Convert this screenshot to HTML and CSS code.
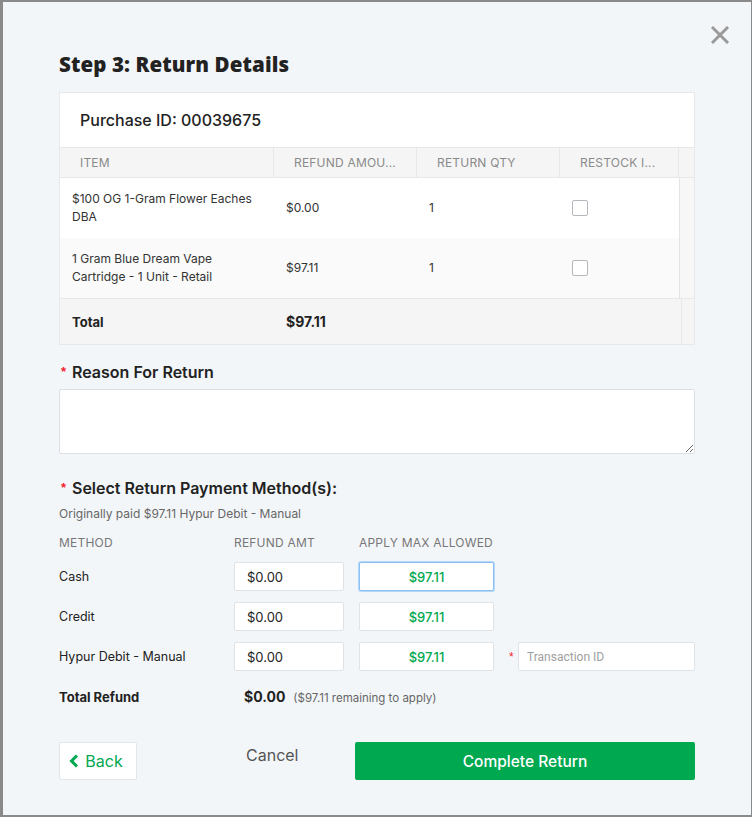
FILE: index.html
```html
<!DOCTYPE html>
<html>
<head>
<meta charset="utf-8">
<link rel="stylesheet" href="styles.css">
</head>
<body>
<div class="modal">
  <button class="close" aria-label="Close">
    <svg width="18" height="18" viewBox="0 0 18 18"><path d="M2 2 L16 16 M16 2 L2 16" stroke="#9a9a9a" stroke-width="3" stroke-linecap="square"/></svg>
  </button>
  <h1 class="title">Step 3: Return Details</h1>

  <div class="card">
    <div class="card-head">Purchase ID: 00039675</div>
    <div class="tbl">
      <div class="row head">
        <div class="cell">Item</div>
        <div class="cell">Refund Amou...</div>
        <div class="cell">Return Qty</div>
        <div class="cell">Restock I...</div>
        <div class="cell gutter"></div>
      </div>
      <div class="row body">
        <div class="cell">$100 OG 1-Gram Flower Eaches DBA</div>
        <div class="cell">$0.00</div>
        <div class="cell">1</div>
        <div class="cell"><span class="check"></span></div>
        <div class="cell gutter"></div>
      </div>
      <div class="row body alt">
        <div class="cell">1 Gram Blue Dream Vape Cartridge - 1 Unit - Retail</div>
        <div class="cell">$97.11</div>
        <div class="cell">1</div>
        <div class="cell"><span class="check"></span></div>
        <div class="cell gutter"></div>
      </div>
      <div class="row total">
        <div class="cell">Total</div>
        <div class="cell amt">$97.11</div>
        <div class="cell"></div>
        <div class="cell"></div>
        <div class="cell gutter"></div>
      </div>
    </div>
  </div>

  <div class="label first"><span class="req">*</span>Reason For Return</div>
  <textarea class="reason"></textarea>

  <div class="label second"><span class="req">*</span>Select Return Payment Method(s):</div>
  <div class="sub">Originally paid $97.11 Hypur Debit - Manual</div>

  <div class="pay">
    <div class="ph">Method</div>
    <div class="ph">Refund Amt</div>
    <div class="ph">Apply Max Allowed</div>
    <div></div>

    <div class="pm">Cash</div>
    <div class="inp">$0.00</div>
    <button class="max focus">$97.11</button>
    <div></div>

    <div class="pm">Credit</div>
    <div class="inp">$0.00</div>
    <button class="max">$97.11</button>
    <div></div>

    <div class="pm">Hypur Debit - Manual</div>
    <div class="inp">$0.00</div>
    <button class="max">$97.11</button>
    <div class="txn"><span class="req small">*</span><div class="txn-input">Transaction ID</div></div>
  </div>

  <div class="total-refund">
    <span class="tr-label">Total Refund</span>
    <span class="tr-amt">$0.00</span>
    <span class="tr-rem">($97.11 remaining to apply)</span>
  </div>

  <div class="actions">
    <button class="back">
      <svg width="10" height="14" viewBox="0 0 10 14"><path d="M8 1.5 L2.5 7 L8 12.5" fill="none" stroke="#00a84f" stroke-width="3"/></svg>
      Back
    </button>
    <button class="cancel">Cancel</button>
    <button class="complete">Complete Return</button>
  </div>
</div>
</body>
</html>
```

FILE: styles.css
```css
html, body {
  margin: 0;
  padding: 0;
}
body {
  background: #8a8a8a;
  font-family: Inter, "Noto Sans", "Liberation Sans", sans-serif;
  color: #222;
  width: 752px;
  height: 817px;
  overflow: hidden;
}
.modal {
  position: relative;
  box-sizing: border-box;
  margin: 2px 1px 0 3px;
  height: 813px;
  background: #f3f6f9;
  padding: 49px 56px 0 56px;
}
.close {
  position: absolute;
  top: 24px;
  right: 22px;
  border: 0;
  background: none;
  padding: 0;
  width: 18px;
  height: 18px;
  cursor: pointer;
}
.close svg { display: block; }
.title {
  margin: 0;
  font-family: "Open Sans", sans-serif;
  font-weight: 800;
  font-size: 20.5px;
  line-height: 26px;
  color: #222;
  letter-spacing: 0.1px;
}
.card {
  margin-top: 15px;
  background: #fff;
  border: 1px solid #e6e8ea;
}
.card-head {
  height: 54px;
  box-sizing: border-box;
  padding: 0 20px;
  display: flex;
  align-items: center;
  font-size: 16px;
  font-weight: 500;
  color: #222;
}
.tbl { display: flex; flex-direction: column; }
.row {
  display: grid;
  box-sizing: border-box;
  grid-template-columns: 214px 143px 143px 119px 15px;
}
.cell {
  display: flex;
  align-items: center;
  box-sizing: border-box;
  padding: 0 12px;
  font-size: 12px;
  line-height: 18px;
  color: #333;
  min-width: 0;
}
.cell.gutter { padding: 0; }
.row.head {
  height: 31px;
  background: #f5f5f5;
  border-top: 1px solid #e8e8e8;
  border-bottom: 1px solid #e8e8e8;
}
.row.head .cell {
  padding-left: 20px;
  text-transform: uppercase;
  color: #8a8a8a;
  font-size: 12px;
  letter-spacing: 0.2px;
  border-right: 1px solid #e8e8e8;
}
.row.head .cell.gutter { border-right: 0; padding: 0; }
.row.body { height: 60px; background: #fff; }
.row.body.alt { background: #fafafa; }
.row.body .gutter {
  background: #f7f7f7;
  border-left: 1px solid #e4e4e4;
}
.row.total {
  height: 46px;
  background: #f5f5f5;
  border-top: 1px solid #e8e8e8;
}
.row.total .cell {
  font-weight: 700;
  font-size: 13px;
  color: #222;
}
.row.total .cell.amt { font-size: 14px; }
.row.total .gutter { border-left: 1px solid #e8e8e8; margin-left: 2px; }
.check {
  display: block;
  width: 16px;
  height: 16px;
  box-sizing: border-box;
  border: 1px solid #b3b8bd;
  border-radius: 2px;
  background: #fff;
}
.label {
  font-size: 16px;
  font-weight: 600;
  line-height: 20px;
  color: #222;
  display: flex;
  align-items: center;
}
.label.first { margin-top: 17px; }
.label.second { margin-top: 24px; }
.req {
  color: #f5222d;
  font-size: 13px;
  width: 11px;
  margin-left: 2px;
  font-family: "Liberation Sans", sans-serif;
}
.reason {
  display: block;
  box-sizing: border-box;
  margin-top: 7px;
  width: 636px;
  height: 65px;
  border: 1px solid #dcdfe3;
  border-radius: 2px;
  background: #fff;
  resize: vertical;
  font-family: inherit;
}
.sub {
  margin-top: 8px;
  font-size: 12px;
  line-height: 16px;
  color: #666;
}
.pay {
  margin-top: 13px;
  display: grid;
  grid-template-columns: 175px 125px 135px 201px;
  row-gap: 11px;
  align-items: center;
}
.ph {
  font-size: 12px;
  line-height: 16px;
  text-transform: uppercase;
  color: #777;
  letter-spacing: 0.2px;
}
.pm {
  font-size: 12.5px;
  color: #222;
}
.inp {
  box-sizing: border-box;
  width: 110px;
  height: 29px;
  background: #fff;
  border: 1px solid #dfe2e6;
  border-radius: 2px;
  padding: 0 12px;
  display: flex;
  align-items: center;
  font-size: 13px;
  color: #222;
}
.max {
  box-sizing: border-box;
  width: 135px;
  height: 29px;
  background: #fff;
  border: 1px solid #dfe2e6;
  border-radius: 2px;
  font-family: inherit;
  font-size: 13px;
  font-weight: 500;
  color: #00a84f;
  padding: 0;
}
.max.focus {
  border-color: #8cc0f2;
  box-shadow: 0 0 0 1px #b5d7f8;
}
.txn {
  display: flex;
  align-items: center;
  justify-content: flex-end;
}
.req.small { width: 9px; margin-left: 0; font-size: 12px; }
.txn-input {
  box-sizing: border-box;
  width: 177px;
  height: 29px;
  background: #fff;
  border: 1px solid #dfe2e6;
  border-radius: 2px;
  padding: 0 8px;
  display: flex;
  align-items: center;
  font-family: Roboto, sans-serif;
  font-size: 12px;
  color: #a0a0a0;
}
.total-refund {
  margin-top: 16px;
  display: flex;
  align-items: baseline;
  height: 20px;
  line-height: 20px;
}
.tr-label {
  width: 185px;
  font-size: 13px;
  font-weight: 700;
  color: #222;
}
.tr-amt {
  font-size: 14px;
  font-weight: 700;
  color: #222;
  margin-right: 8px;
}
.tr-rem {
  font-size: 11.5px;
  color: #666;
}
.actions {
  margin-top: 35px;
  display: flex;
  align-items: flex-start;
}
.actions button {
  font-family: Inter, "Noto Sans", sans-serif;
  cursor: pointer;
}
.back {
  box-sizing: border-box;
  width: 78px;
  height: 38px;
  background: #fff;
  border: 1px solid #e3e6e9;
  border-radius: 2px;
  color: #00a84f;
  font-size: 16px;
  display: flex;
  align-items: center;
  justify-content: center;
  gap: 6px;
  padding: 0 4px 0 0;
}
.back svg { display: block; }
.cancel {
  background: none;
  border: 0;
  padding: 0;
  margin-left: 109px;
  height: 26px;
  font-size: 16px;
  color: #555;
}
.complete {
  margin-left: auto;
  box-sizing: border-box;
  width: 340px;
  height: 38px;
  background: #00a84f;
  border: 0;
  border-radius: 2px;
  color: #fff;
  font-size: 15.5px;
  font-weight: 500;
}
```
